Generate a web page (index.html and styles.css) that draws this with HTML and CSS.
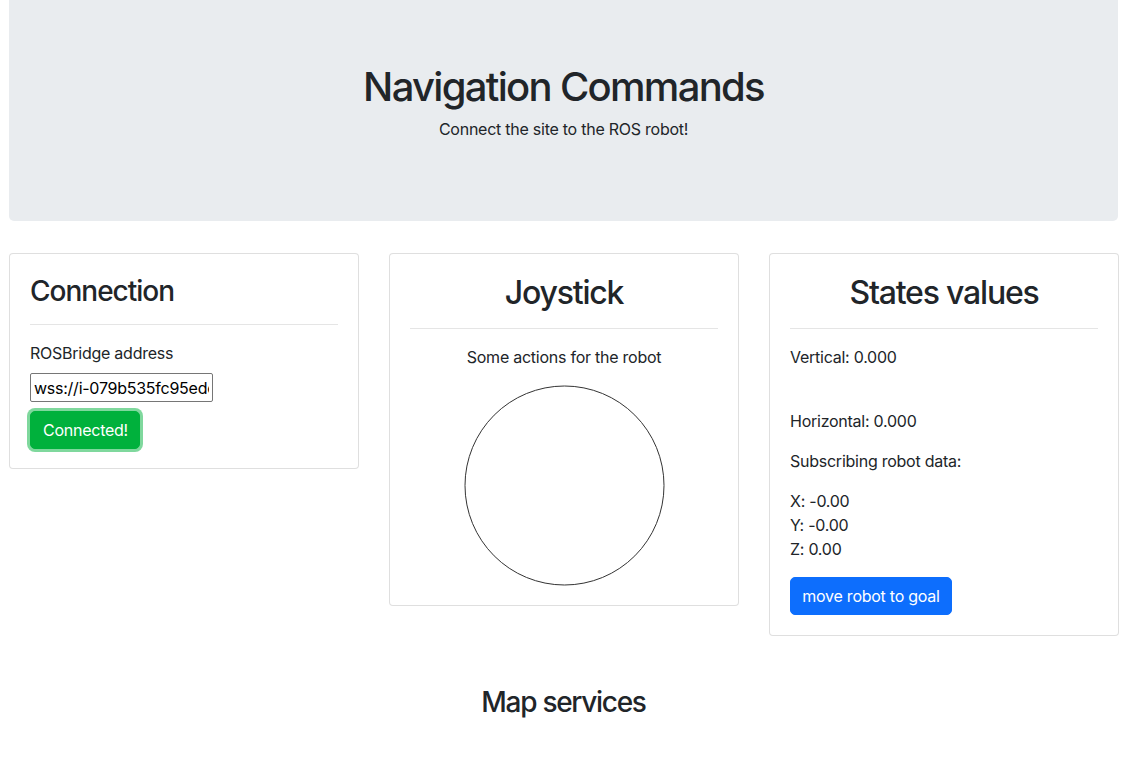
FILE: index.html
```html
<!DOCTYPE html>
<html lang="en">
<head>
<meta charset="utf-8">
<title>Navigation Commands</title>
<link rel="stylesheet" href="styles.css">
</head>
<body>
<div class="page">
  <header class="jumbotron">
    <h1 class="jumbo-title">Navigation Commands</h1>
    <p class="jumbo-lead">Connect the site to the ROS robot!</p>
  </header>

  <div class="cards">
    <section class="card">
      <h3 class="card-title-sm">Connection</h3>
      <hr class="divider">
      <p class="label">ROSBridge address</p>
      <input class="address" type="text" value="wss://i-079b535fc95ede0a3.robotigniteacademy.com/rosbridge/">
      <button class="btn btn-success" type="button">Connected!</button>
    </section>

    <section class="card card-center">
      <h2 class="card-title-lg">Joystick</h2>
      <hr class="divider">
      <p class="text">Some actions for the robot</p>
      <div class="joystick">
        <svg width="201" height="201" viewBox="0 0 201 201" aria-hidden="true">
          <circle cx="100.5" cy="100.5" r="99.5" fill="#fff" stroke="#333" stroke-width="1"/>
        </svg>
      </div>
    </section>

    <section class="card card-tall">
      <h2 class="card-title-lg card-title-center">States values</h2>
      <hr class="divider">
      <p class="text">Vertical: 0.000</p>
      <div class="spacer"></div>
      <p class="text">Horizontal: 0.000</p>
      <p class="text">Subscribing robot data:</p>
      <p class="text">X: -0.00<br>Y: -0.00<br>Z: 0.00</p>
      <button class="btn btn-primary" type="button">move robot to goal</button>
    </section>
  </div>

  <h3 class="section-title">Map services</h3>
</div>
</body>
</html>
```

FILE: styles.css
```css
* { box-sizing: border-box; }

html, body {
  margin: 0;
  padding: 0;
  background: #fff;
}

body {
  font-family: Inter, "Noto Sans", "Liberation Sans", sans-serif;
  font-size: 16px;
  line-height: 24px;
  letter-spacing: -0.25px;
  color: #212529;
  overflow: hidden;
}

.page {
  padding: 0 15px 0 9px;
}

.jumbotron {
  background: #e9ecef;
  border-radius: 0 0 5px 5px;
  padding: 63px 32px 62px;
  text-align: center;
}

.jumbo-title {
  margin: 0 0 6px;
  font-size: 40px;
  line-height: 48px;
  font-weight: 500;
  letter-spacing: -1.7px;
}

.jumbo-lead {
  margin: 0 0 18px;
}

.cards {
  display: grid;
  grid-template-columns: 350px 350px 350px;
  column-gap: 30px;
  align-items: start;
  margin-top: 32px;
}

.card {
  border: 1px solid rgba(0, 0, 0, 0.125);
  border-radius: 4px;
  padding: 19px 20px 19px;
  background: #fff;
}

.card-tall { padding-bottom: 20px; }

.card-center { text-align: center; }

.card-title-sm {
  margin: 0;
  font-size: 28px;
  line-height: 34px;
  font-weight: 500;
  letter-spacing: -1px;
  padding-top: 1px;
}

.card-title-lg {
  margin: 0;
  font-size: 32px;
  line-height: 38px;
  font-weight: 500;
  padding-top: 1px;
  letter-spacing: -1.2px;
}

.card-title-center { text-align: center; }

.divider {
  border: 0;
  border-top: 1px solid rgba(0, 0, 0, 0.1);
  margin: 16px 0 16px;
  height: 0;
}

.label {
  margin: 0 0 8px;
}

.text {
  margin: 0 0 16px;
}

.spacer { height: 24px; }

.address {
  display: block;
  width: 183px;
  height: 29px;
  margin: 0 0 9px;
  padding: 1px 3px;
  font-family: inherit;
  font-size: 16px;
  letter-spacing: -0.25px;
  color: #000;
  border: 1px solid #767676;
  border-radius: 2px;
  background: #fff;
}

.joystick {
  display: flex;
  justify-content: center;
  height: 201px;
}

.btn {
  display: block;
  font-family: inherit;
  font-size: 16px;
  line-height: 24px;
  letter-spacing: -0.25px;
  padding: 6px 12px;
  border: 1px solid transparent;
  border-radius: 5px;
  color: #fff;
  cursor: pointer;
}

.btn-success {
  background: #00b13c;
  border-color: #00b13c;
  width: 110px;
  box-shadow: 0 0 0 3px rgba(0, 177, 60, 0.5);
}

.btn-primary {
  background: #0d6efd;
  border-color: #0d6efd;
  width: 162px;
  padding: 6px 8px;
}

.section-title {
  margin: 49px 0 0;
  text-align: center;
  font-size: 28px;
  line-height: 34px;
  font-weight: 500;
  letter-spacing: -1.3px;
}
```
